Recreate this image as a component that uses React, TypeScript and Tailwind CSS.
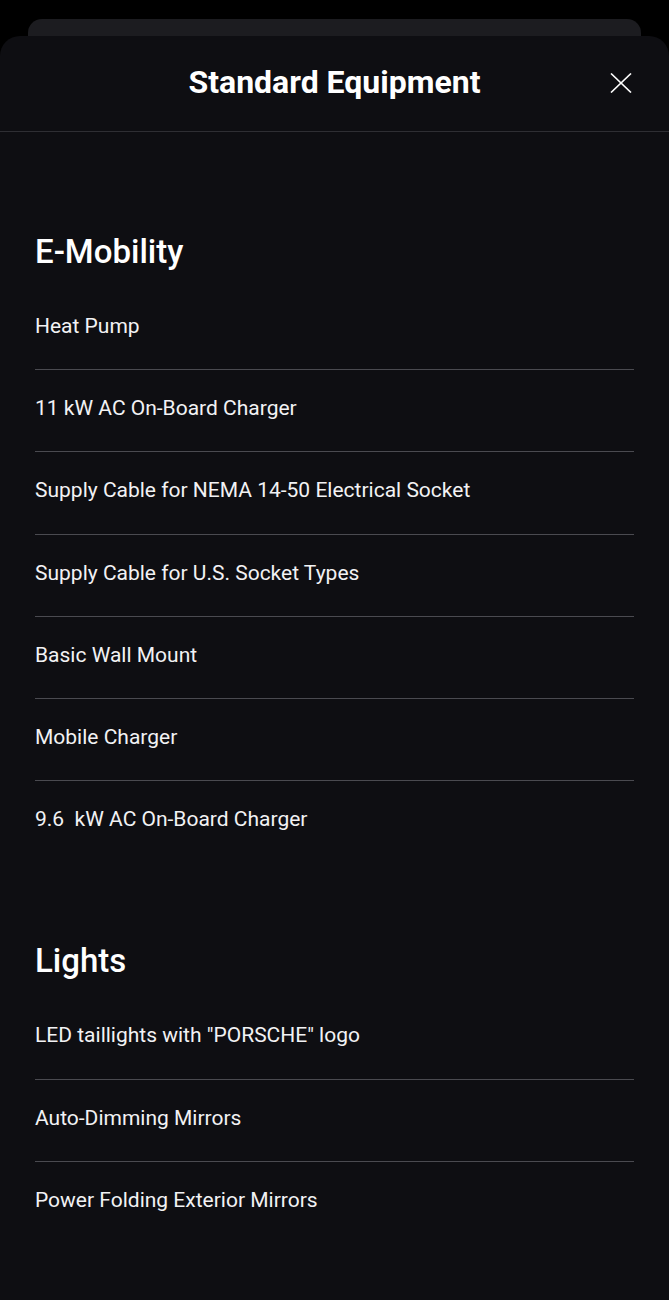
const sections = [
    {
        title: "E-Mobility",
        items: [
            "Heat Pump",
            "11 kW AC On-Board Charger",
            "Supply Cable for NEMA 14-50 Electrical Socket",
            "Supply Cable for U.S. Socket Types",
            "Basic Wall Mount",
            "Mobile Charger",
            "9.6  kW AC On-Board Charger",
        ],
    },
    {
        title: "Lights",
        items: [
            'LED taillights with "PORSCHE" logo',
            "Auto-Dimming Mirrors",
            "Power Folding Exterior Mirrors",
        ],
    },
];

export default function App() {
    return (
        <div className="bg-black min-h-[1300px] pt-[19px] font-['Roboto',sans-serif] text-white">
            <div className="mx-[28px] h-[30px] rounded-t-[14px] bg-[#1c1c20]" />
            <div className="relative -mt-[13px] min-h-[1264px] rounded-t-[20px] bg-[#0e0e12]">
                <div className="relative flex h-[96px] items-center justify-center border-b border-[#2e2e33]">
                    <h1 className="text-[32px] font-bold leading-none pb-[4px]">Standard Equipment</h1>
                    <button className="absolute left-[610px] top-[37px] text-white">
                        <svg width="22" height="20" viewBox="0 0 22 20" fill="none" stroke="currentColor" strokeWidth="1.6">
                            <line x1="1" y1="0.5" x2="21" y2="19.5" />
                            <line x1="21" y1="0.5" x2="1" y2="19.5" />
                        </svg>
                    </button>
                </div>
                <div className="px-[35px] pt-[96px] pb-[60px]">
                    {sections.map((s, i) => (
                        <section key={s.title} className={i > 0 ? "mt-[75px]" : ""}>
                            <h2 className="text-[33px] font-medium leading-[48px]">{s.title}</h2>
                            <ul className="mt-[12px]">
                                {s.items.map((item, j) => (
                                    <li
                                        key={item}
                                        className={`whitespace-pre pt-[23px] pb-[27.2px] text-[21px] leading-[31px] text-[#f2f2f4] ${
                                            j < s.items.length - 1 ? "border-b border-[#4a4a50]" : ""
                                        }`}
                                    >
                                        {item}
                                    </li>
                                ))}
                            </ul>
                        </section>
                    ))}
                </div>
            </div>
        </div>
    );
}
